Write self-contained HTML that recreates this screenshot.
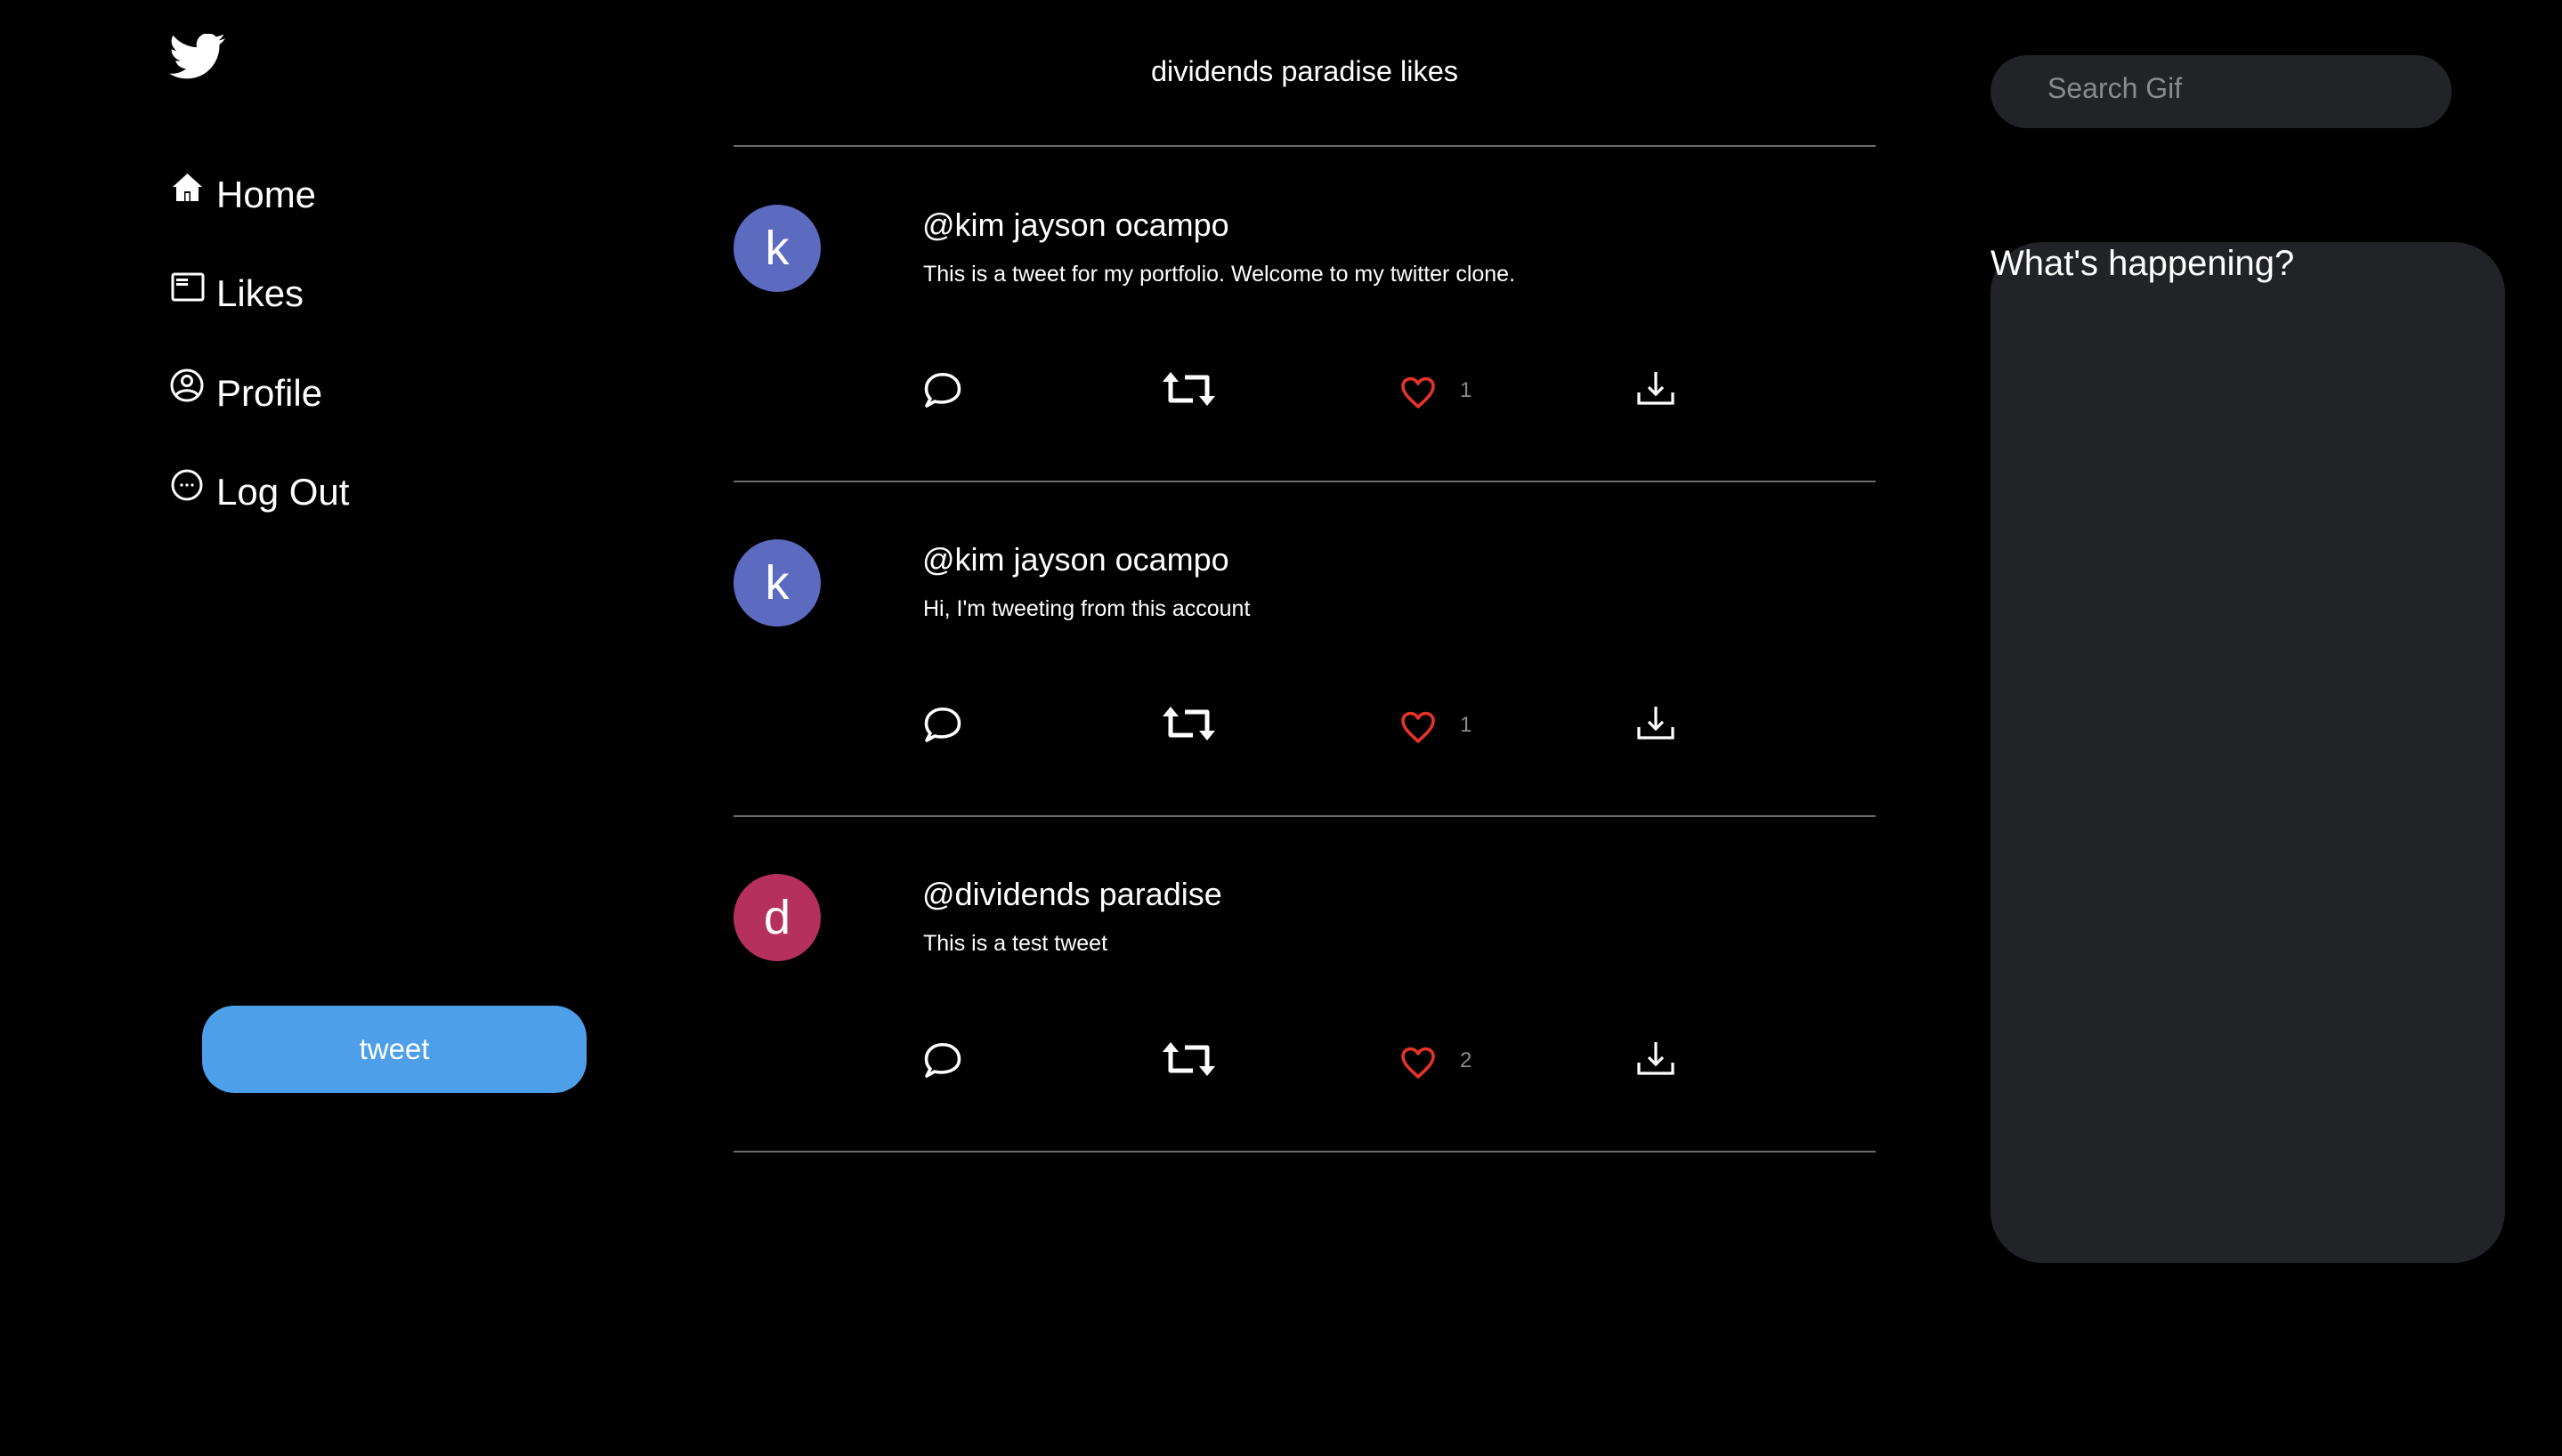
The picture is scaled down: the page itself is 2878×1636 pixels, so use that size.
<!DOCTYPE html>
<html><head><meta charset="utf-8"><style>
*{margin:0;padding:0;box-sizing:border-box}
html,body{width:2878px;height:1636px;background:#000;overflow:hidden;color:#fff;font-family:"Liberation Sans",sans-serif}
.a{position:absolute}
.nav{position:absolute;left:243px;font-size:42px;line-height:1;white-space:nowrap}
.line{position:absolute;left:824px;width:1283px;height:2px;background:#6b6b6b}
.av{position:absolute;left:824px;width:98px;height:98px;border-radius:50%;text-align:center;line-height:98px;font-size:54px}
.nm{position:absolute;left:1036px;font-size:36px;line-height:1;white-space:nowrap}
.tx{position:absolute;left:1037px;font-size:25px;line-height:1;white-space:nowrap}
.cnt{position:absolute;left:1640px;font-size:24px;color:#8a8a8a;line-height:1}
</style></head><body>
<svg class="a" style="left:190px;top:38px" width="63" height="51" viewBox="0 2.5 24 19.5"><path fill="#fff" d="M23.95 4.57a10 10 0 0 1-2.82.77 4.96 4.96 0 0 0 2.160-2.72c-.95.55-2 .95-3.12 1.18a4.92 4.92 0 0 0-8.38 4.48A13.94 13.94 0 0 1 1.64 3.16a4.92 4.92 0 0 0 1.52 6.57 4.9 4.9 0 0 1-2.23-.62v.06a4.92 4.92 0 0 0 3.95 4.83 4.95 4.95 0 0 1-2.21.08 4.93 4.93 0 0 0 4.6 3.42A9.87 9.87 0 0 1 0 19.54a13.94 13.94 0 0 0 7.56 2.21c9.05 0 14-7.5 14-13.98 0-.21 0-.42-.02-.63A9.94 9.94 0 0 0 24 4.59z"/></svg>

<svg class="a" style="left:192px;top:193px" width="37" height="36" viewBox="0 0 37 36"><path d="M18.5 2 L2 17 H6 V33 H31 V17 H35 Z" fill="#fff"/><rect x="15" y="22" width="7" height="11" fill="#000"/><rect x="16.5" y="24" width="4" height="9" fill="#fff"/></svg>
<div class="nav" style="top:198px">Home</div>
<svg class="a" style="left:192px;top:306px" width="38" height="33" viewBox="0 0 38 33"><rect x="2" y="2" width="34" height="29" rx="2" fill="none" stroke="#fff" stroke-width="3"/><rect x="6" y="7" width="13" height="3" fill="#fff"/><rect x="6" y="12" width="13" height="3" fill="#fff"/></svg>
<div class="nav" style="top:309px">Likes</div>
<svg class="a" style="left:191px;top:414px" width="38" height="38" viewBox="0 0 38 38"><circle cx="19" cy="19" r="17" fill="none" stroke="#fff" stroke-width="3"/><circle cx="19" cy="14" r="5.5" fill="none" stroke="#fff" stroke-width="3"/><path d="M7 30 C11 23 27 23 31 30" fill="none" stroke="#fff" stroke-width="3"/></svg>
<div class="nav" style="top:421px">Profile</div>
<svg class="a" style="left:192px;top:527px" width="36" height="36" viewBox="0 0 36 36"><circle cx="18" cy="18" r="16" fill="none" stroke="#fff" stroke-width="3"/><circle cx="12" cy="18" r="1.6" fill="#fff"/><circle cx="18" cy="18" r="1.6" fill="#fff"/><circle cx="24" cy="18" r="1.6" fill="#fff"/></svg>
<div class="nav" style="top:532px">Log Out</div>

<div class="a" style="left:227px;top:1130px;width:432px;height:98px;border-radius:36px;background:#4d9fe9;text-align:center;line-height:98px;font-size:33px">tweet</div>

<div class="a" style="left:824px;width:1283px;top:64px;text-align:center;font-size:32.5px;line-height:1">dividends paradise likes</div>
<div class="line" style="top:163px"></div>
<div class="line" style="top:540px"></div>
<div class="line" style="top:916px"></div>
<div class="line" style="top:1293px"></div>

<div class="av" style="top:230px;background:#5c6bc0">k</div>
<div class="nm" style="top:235px">@kim jayson ocampo</div>
<div class="tx" style="top:296px">This is a tweet for my portfolio. Welcome to my twitter clone.</div>
<div class="av" style="top:606px;background:#5c6bc0">k</div>
<div class="nm" style="top:611px">@kim jayson ocampo</div>
<div class="tx" style="top:672px">Hi, I'm tweeting from this account</div>
<div class="av" style="top:982px;background:#b5305c">d</div>
<div class="nm" style="top:987px">@dividends paradise</div>
<div class="tx" style="top:1048px">This is a test tweet</div>

<svg width="0" height="0" class="a"><defs>
<symbol id="cm" viewBox="0 0 44 40"><path d="M4 38 L8 30 C2 24 2 14 8 8 C15 1 29 1 36 8 C42 14 42 24 36 29 C30 34 20 35 13 33 Z" fill="none" stroke="#fff" stroke-width="3.6" stroke-linejoin="round"/></symbol>
<symbol id="rt" viewBox="0 0 64 40"><g fill="none" stroke="#fff" stroke-width="5" stroke-linejoin="round"><path d="M11 9 V33 H36"/><path d="M27 7 H52 V31"/></g><path d="M2 12 L11 1 L20 12 Z M43 28 L52 39 L61 28 Z" fill="#fff"/></symbol>
<symbol id="ht" viewBox="0 0 40 38"><path d="M20 35 C14 29 3 21 3 12 C3 3 15 0 20 9 C25 0 37 3 37 12 C37 21 26 29 20 35 Z" fill="none" stroke="#e5332a" stroke-width="3.6" stroke-linejoin="round"/></symbol>
<symbol id="dl" viewBox="0 0 42 38"><g fill="none" stroke="#fff" stroke-width="3.2"><path d="M21 1 V26 M13 18 L21 26 L29 18"/><path d="M2 24 V36 H40 V24"/></g></symbol>
</defs></svg>

<svg class="a" style="left:1037px;top:418px" width="44" height="40"><use href="#cm"/></svg>
<svg class="a" style="left:1304px;top:417px" width="64" height="40"><use href="#rt"/></svg>
<svg class="a" style="left:1573px;top:422px" width="40" height="38"><use href="#ht"/></svg>
<div class="cnt" style="top:427px">1</div>
<svg class="a" style="left:1839px;top:417px" width="42" height="38"><use href="#dl"/></svg>

<svg class="a" style="left:1037px;top:794px" width="44" height="40"><use href="#cm"/></svg>
<svg class="a" style="left:1304px;top:793px" width="64" height="40"><use href="#rt"/></svg>
<svg class="a" style="left:1573px;top:798px" width="40" height="38"><use href="#ht"/></svg>
<div class="cnt" style="top:803px">1</div>
<svg class="a" style="left:1839px;top:793px" width="42" height="38"><use href="#dl"/></svg>

<svg class="a" style="left:1037px;top:1171px" width="44" height="40"><use href="#cm"/></svg>
<svg class="a" style="left:1304px;top:1170px" width="64" height="40"><use href="#rt"/></svg>
<svg class="a" style="left:1573px;top:1175px" width="40" height="38"><use href="#ht"/></svg>
<div class="cnt" style="top:1180px">2</div>
<svg class="a" style="left:1839px;top:1170px" width="42" height="38"><use href="#dl"/></svg>

<div class="a" style="left:2236px;top:62px;width:518px;height:82px;border-radius:41px;background:#222327"></div>
<div class="a" style="left:2300px;top:83px;font-size:32px;color:#8a8a8a;line-height:1">Search Gif</div>

<div class="a" style="left:2236px;top:272px;width:578px;height:1147px;border-radius:58px;background:#222327"></div>
<div class="a" style="left:2236px;top:276px;font-size:40px;line-height:1;white-space:nowrap">What's happening?</div>
</body></html>
